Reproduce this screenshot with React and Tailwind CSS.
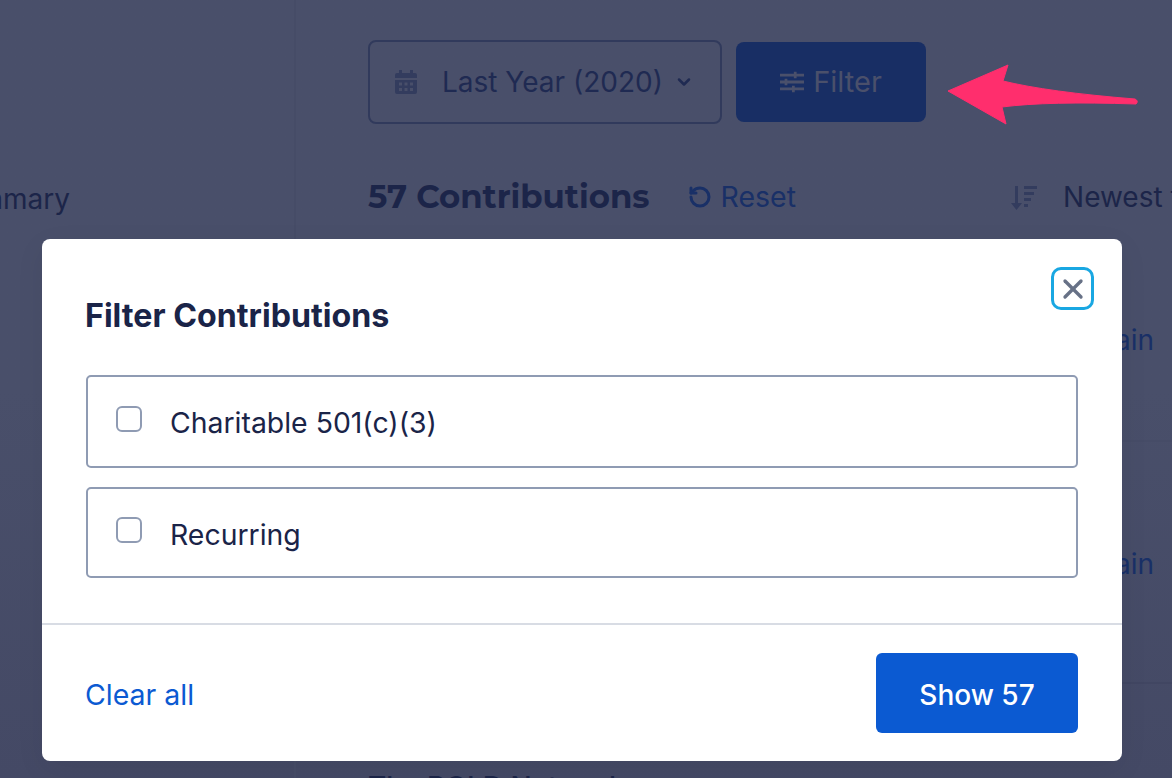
import React from "react";
import { X, ChevronDown, RotateCcw } from "lucide-react";

const inter = "font-['Inter','Noto_Sans',sans-serif]";

function Option({ label, h, textPad }) {
  return (
    <label className={`flex items-center border-2 border-[#8f9bb3] rounded-[5px] pl-[28px] ${h}`}>
      <span className="w-[26px] h-[26px] mb-[6px] rounded-[6px] border-2 border-[#8f9bb3] bg-white shrink-0" />
      <span className={`ml-[28px] text-[28.400px] text-[#1a2448] ${textPad}`}>{label}</span>
    </label>
  );
}

export default function App() {
  return (
    <div className={`relative w-[1172px] h-[778px] overflow-hidden bg-gradient-to-b from-[#494f6a] via-[#494f6a] to-[#444965] ${inter}`}>
      <div className="flex h-full">
        <aside className="w-[296px] h-full shrink-0 border-r-2 border-[#464c67] overflow-hidden relative">
          <p className="absolute left-[-56px] top-[178px] text-[28px] text-[#1c2549] whitespace-nowrap">Summary</p>
        </aside>
        <main className="flex-1 pl-[72px] pt-[40px] overflow-hidden">
          <div className="flex items-center gap-[14px]">
            <div className="w-[354px] h-[84px] rounded-[8px] border-2 border-[#313a5c] flex items-center pl-[25px]">
              <svg width="22" height="24" viewBox="0 0 22 24" fill="#333c5e" className="shrink-0">
                <path d="M4 0h3v3h8V0h3v3h2a2 2 0 0 1 2 2v3H0V5a2 2 0 0 1 2-2h2z" />
                <path fillRule="evenodd" d="M0 10h22v12a2 2 0 0 1-2 2H2a2 2 0 0 1-2-2zm4 2.500v3h3v-3zm5.500 0v3h3v-3zm5.500 0v3h3v-3zM4 18v3h3v-3zm5.500 0v3h3v-3zm5.500 0v3h3v-3z" />
              </svg>
              <span className="ml-[25px] text-[28px] text-[#1f2a52] whitespace-nowrap">Last Year (2020)</span>
              <ChevronDown size={20} strokeWidth={3} className="ml-[11px] text-[#1f2a52] shrink-0" />
            </div>
            <div className="w-[190px] h-[80px] rounded-[8px] bg-[#182e64] flex items-center justify-center gap-[9px] text-[#4a506b]">
              <svg width="24" height="24" viewBox="0 0 26 24" fill="currentColor" className="shrink-0">
                <path d="M0 3h15V1h3v2h8v3h-8v2h-3V6H0zM0 10.500h5V8.500h3v2h18v3H8v2H5v-2H0zM0 18h13v-2h3v2h10v3H16v2h-3v-2H0z" />
              </svg>
              <span className="text-[29px]">Filter</span>
            </div>
          </div>
          <div className="flex items-center mt-[49px] whitespace-nowrap">
            <h2 className="text-[32.400px] font-bold text-[#1c2549] font-['Montserrat','Inter',sans-serif] shrink-0">57 Contributions</h2>
            <span className="ml-[38px] flex items-center gap-[9px] text-[28.500px] text-[#193067] shrink-0">
              <RotateCcw size={24} strokeWidth={3} />
              Reset
            </span>
            <svg className="ml-[214px] shrink-0" width="28" height="26" viewBox="0 0 28 26" fill="#333c5e">
              <path d="M5 2h3v17h4l-5.500 7-5.500-7h4zM14 2h13v3H14zM14 8h10v3H14zM14 14h7v3h-7zM14 20h4v3h-4z" />
            </svg>
            <span className="ml-[25px] text-[28px] text-[#1c2549] shrink-0">Newest first</span>
          </div>
        </main>
      </div>

      <svg className="absolute left-[948px] top-[64px]" width="192" height="64" viewBox="0 0 192 64">
        <path d="M0 27 L60 1 L55 17 Q100 28 187 35 Q191 37 188 40 Q100 37 54 43 L58 60 Z" fill="#ff2e6d" stroke="#ff2e6d" strokeLinejoin="round" />
      </svg>

      <p className="absolute left-[1115px] top-[326px] text-[28px] text-[#193067] leading-[28px]">ain</p>
      <p className="absolute left-[1115px] top-[550px] text-[28px] text-[#193067] leading-[28px]">ain</p>
      <div className="absolute left-[1122px] top-[440px] w-[50px] h-[2px] bg-[#464c67]" />
      <div className="absolute left-[1122px] top-[682px] w-[50px] h-[2px] bg-[#414662]" />
      <p className="absolute left-[368px] top-[770px] text-[28px] leading-[34px] font-medium text-[#1c2549] whitespace-nowrap">The BOLD Network</p>

      <div className="absolute left-[42px] top-[239px] w-[1080px] h-[522px] rounded-[8px] bg-white flex flex-col shadow-[0_8px_30px_rgba(0,0,0,0.06)]">
        <button className="absolute right-[28px] top-[28px] w-[43px] h-[43px] rounded-[10px] border-[3px] border-[#19a7e2] flex items-center justify-center">
          <X size={32} strokeWidth={2.500} className="text-[#677186]" />
        </button>
        <div className="flex-1 px-[44px] pt-[57px]">
          <h1 className="text-[32.200px] leading-[40px] font-bold -ml-[1px] text-[#1a2448]">Filter Contributions</h1>
          <div className="mt-[39px] flex flex-col gap-[19px]">
            <Option label="Charitable 501(c)(3)" h="h-[93px]" textPad="pt-[4px]" />
            <Option label="Recurring" h="h-[91px]" textPad="pt-[6px]" />
          </div>
        </div>
        <div className="h-[138px] border-t-2 border-[#d8dce4] px-[44px] flex items-center justify-between shrink-0">
          <span className="text-[28.500px] text-[#0b5ad2] -ml-[1px] pt-[4px]">Clear all</span>
          <button className="w-[202px] h-[80px] rounded-[6px] bg-[#0b5ad2] text-white text-[28px] font-medium pt-[4px]">Show 57</button>
        </div>
      </div>
    </div>
  );
}
